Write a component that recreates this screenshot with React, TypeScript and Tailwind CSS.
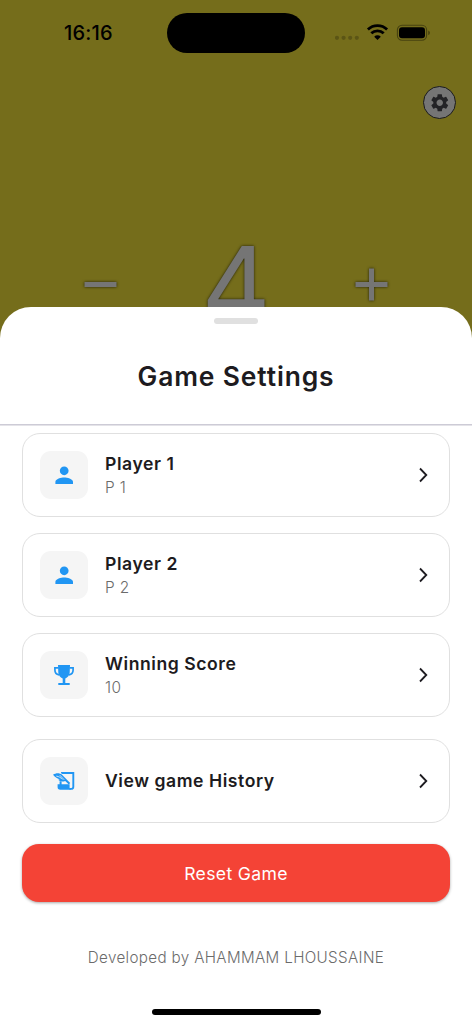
import type { ReactNode } from 'react'
import { MdPerson, MdSettings } from 'react-icons/md'

function StatusBar() {
  return (
    <div className="flex h-[65px] items-center">
      <div className="w-[167px] pt-px pl-[64px] text-[20px] font-medium tracking-[0.2px] text-black">16:16</div>
      <div className="h-[40px] w-[138px] rounded-full bg-black" />
      <svg className="ml-[30px]" width="98" height="24" viewBox="0 0 98 24" fill="none">
        <g fill="#000" fillOpacity="0.22">
          <circle cx="2" cy="16.8" r="2.1" />
          <circle cx="8.6" cy="16.8" r="2.1" />
          <circle cx="15.2" cy="16.8" r="2.1" />
          <circle cx="21.8" cy="16.8" r="2.1" />
        </g>
        <g stroke="#000" strokeWidth="2.8">
          <path d="M32.9 8.6a13.8 13.8 0 0 1 19.2 0" />
          <path d="M36.3 12.3a8.9 8.9 0 0 1 12.4 0" />
        </g>
        <path d="M42.5 19l-3.3-3.300a4.700 4.700 0 0 1 6.600 0z" fill="#000" />
        <rect x="62.4" y="4.2" width="29.2" height="15" rx="4.6" stroke="#000" strokeOpacity="0.4" strokeWidth="1.1" />
        <rect x="64" y="6.2" width="26" height="11" rx="3" fill="#000" />
        <path d="M93.3 9.4c2 .8 2 3.8 0 4.6z" fill="#000" fillOpacity="0.45" />
      </svg>
    </div>
  )
}

function ScoreBoard() {
  return (
    <div className="flex h-[94px] items-start justify-between pr-[84px] pl-[84px] text-[#757575]">
      <svg className="mt-[33px] drop-shadow-[0_0_1.5px_rgba(0,0,0,0.7)]" width="33" height="33" viewBox="0 0 33 33">
        <path d="M.5 16.5h32" stroke="currentColor" strokeWidth="5" />
      </svg>
      <span className="-mt-[3px] text-[107px] leading-[107px] [text-shadow:0_0_3px_rgba(0,0,0,0.75)]">4</span>
      <svg className="mt-[33px] drop-shadow-[0_0_1.5px_rgba(0,0,0,0.7)]" width="33" height="33" viewBox="0 0 33 33">
        <path d="M.5 16.5h32M16.5 .5v32" stroke="currentColor" strokeWidth="5" />
      </svg>
    </div>
  )
}

function TrophyIcon() {
  return (
    <svg width="20" height="20" viewBox="0 0 20 20" fill="currentColor">
      <path d="M4 0h12l-.3 7.500c-.2 3-2 5-4.400 6v4.400h4.400V20H4.300v-2.100h4.400v-4.400c-2.400-1-4.200-3-4.400-6z" />
      <path
        d="M4.500 2.800H.9V5c0 2.700 1.300 4.400 4.200 4.900M15.500 2.800h3.600V5c0 2.700-1.300 4.400-4.200 4.900"
        fill="none"
        stroke="currentColor"
        strokeWidth="1.7"
      />
    </svg>
  )
}

function HistoryIcon() {
  return (
    <svg width="22" height="18" viewBox="0 0 22 18" fill="currentColor">
      <path d="M0 2.800C3 .8 6.500.7 9 2.800l8.200 8.200-1.400 1.400-3.600-3.500C9.500 10 7 9.600 5.200 7.800l1.700-.6C4.500 6.800 2.200 5.400 0 2.800z" />
      <path d="M3.300 4.100c2.700.4 4.500 1.500 6 3.300M6.800 3.200l4.400 4.600" fill="none" stroke="#f5f5f5" strokeWidth=".8" />
      <path d="M9 1.500V1h11.300v13.700a2.200 2.200 0 0 1-2.200 2.200h-1.700" fill="none" stroke="currentColor" strokeWidth="1.900" />
      <path d="M6.600 9.200h2v3h8v3.200c0 .8.500 1.400 1.300 1.400v1H7.300A2.700 2.700 0 0 1 4.600 15v-2.800h2z" />
    </svg>
  )
}

function SettingsRow({ icon, title, value }: { icon: ReactNode; title: string; value?: string }) {
  return (
    <button className="flex h-[84px] w-full items-center rounded-[18px] border-[1.3px] border-[#e0e0e0] pr-[21px] pl-[17px] text-left">
      <span className="flex size-[48px] items-center justify-center rounded-[11px] bg-[#f5f5f5] text-[#2196f3]">
        {icon}
      </span>
      <span className="ml-[17px] flex flex-1 flex-col">
        <span className={`text-[17.6px] leading-[24px] font-semibold tracking-[0.55px] text-[#1d1b20] ${value ? 'mt-[2px]' : ''}`}>
          {title}
        </span>
        {value && (
          <span className="text-[15.4px] leading-[24px] font-light tracking-[0.4px] text-[#6b6b6b]">{value}</span>
        )}
      </span>
      <svg width="10" height="16" viewBox="0 0 10 16" fill="none">
        <path d="M2 1.500L8.300 8L2 14.500" stroke="#1d1b20" strokeWidth="1.800" />
      </svg>
    </button>
  )
}

export default function App() {
  return (
    <div className="flex h-[1024px] w-[472px] flex-col overflow-hidden bg-[#756d1b] font-['Inter',sans-serif]">
      <StatusBar />
      <div className="flex h-[170px] justify-end pt-[21px] pr-[16px]">
        <button className="flex size-[33px] items-center justify-center rounded-full border-[1.5px] border-[#1b1b1b] bg-[#757575] text-[#232326]">
          <MdSettings size={21.5} />
        </button>
      </div>
      <ScoreBoard />
      <main className="-mt-[22px] flex flex-1 flex-col rounded-t-[31px] bg-white">
        <div className="mt-[11px] h-[6px] w-[44px] self-center rounded-full bg-[#e0e0e0]" />
        <h1 className="mt-[32px] text-center text-[26.4px] leading-[40px] font-semibold tracking-[0.88px] text-[#1d1b20]">
          Game Settings
        </h1>
        <div className="mt-[28px] h-px shrink-0 bg-[#cdcbd6]" />
        <div className="h-px shrink-0 bg-[#e4e3e8]" />
        <div className="flex flex-col gap-[16px] px-[22px] pt-[7px]">
          <SettingsRow icon={<MdPerson size={26.4} />} title="Player 1" value="P 1" />
          <SettingsRow icon={<MdPerson size={26.4} />} title="Player 2" value="P 2" />
          <SettingsRow icon={<TrophyIcon />} title="Winning Score" value="10" />
        </div>
        <div className="px-[22px] pt-[22px]">
          <SettingsRow icon={<HistoryIcon />} title="View game History" />
          <button className="mt-[21px] h-[58px] w-full rounded-[17px] bg-[#f44336] pt-[2px] text-[17.6px] tracking-[0.35px] text-white shadow-[0_1px_3px_rgba(0,0,0,0.35)]">
            Reset Game
          </button>
        </div>
        <p className="mt-[44px] text-center text-[15.2px] leading-[24px] font-light tracking-[0.35px] text-[#6b6b6b]">
          Developed by AHAMMAM LHOUSSAINE
        </p>
        <div className="mt-auto mb-[9px] h-[6px] w-[169px] self-center rounded-full bg-black" />
      </main>
    </div>
  )
}
